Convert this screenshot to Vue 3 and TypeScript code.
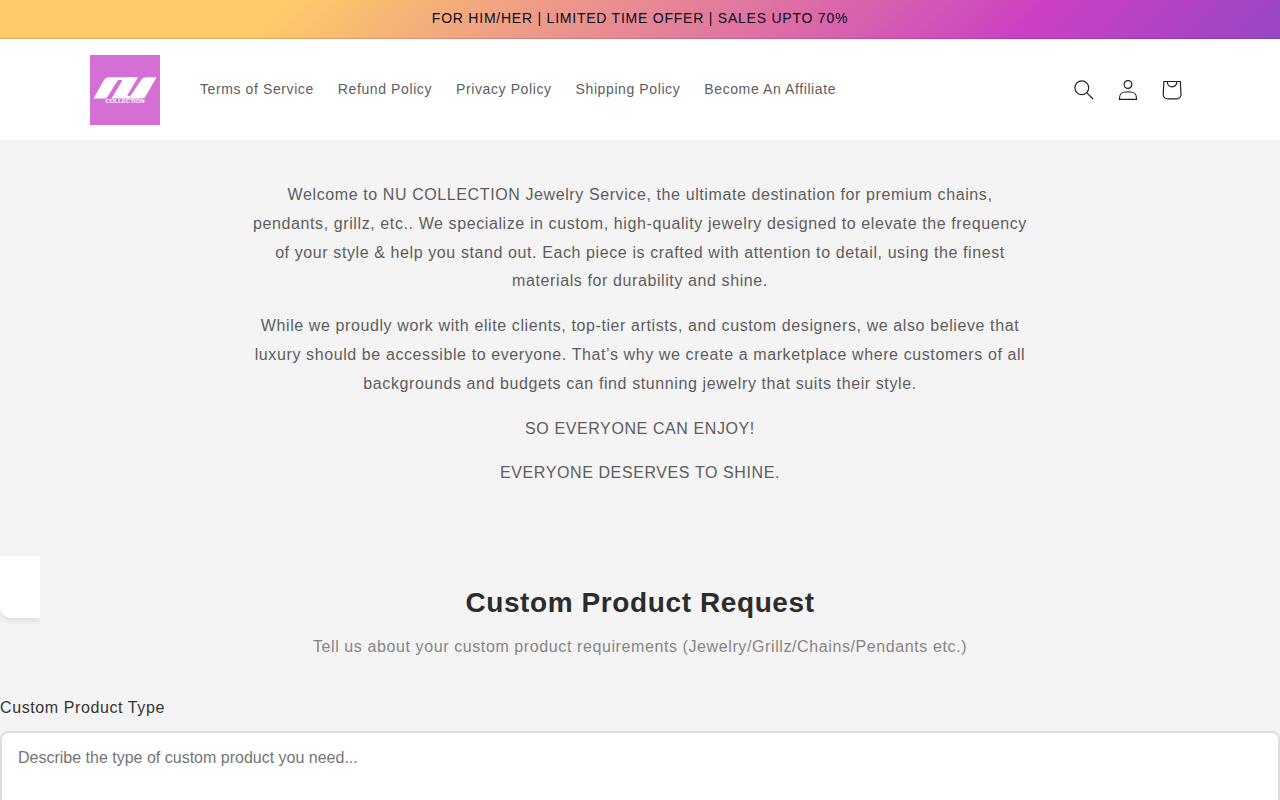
<script setup lang="ts">
const links: string[] = [
  'Terms of Service',
  'Refund Policy',
  'Privacy Policy',
  'Shipping Policy',
  'Become An Affiliate',
]

const intro: string[] = [
  'Welcome to NU COLLECTION Jewelry Service, the ultimate destination for premium chains, pendants, grillz, etc.. We specialize in custom, high-quality jewelry designed to elevate the frequency of your style & help you stand out. Each piece is crafted with attention to detail, using the finest materials for durability and shine.',
  'While we proudly work with elite clients, top-tier artists, and custom designers, we also believe that luxury should be accessible to everyone. That’s why we create a marketplace where customers of all backgrounds and budgets can find stunning jewelry that suits their style.',
  'SO EVERYONE CAN ENJOY!',
  'EVERYONE DESERVES TO SHINE.',
]
</script>

<template>
  <div class="page">
    <div class="announcement">
      <p>FOR HIM/HER | LIMITED TIME OFFER | SALES UPTO 70%</p>
    </div>

    <header class="header">
      <div class="header-inner">
        <a class="logo" href="#" aria-label="NU Collection">
          <svg viewBox="0 0 70 70" width="70" height="70">
            <rect width="70" height="70" fill="#d66fd4" />
            <path
              d="M3.500 43.500 14 25q1.500-2.700 4.500-2.700H48L37.500 40q-.5 1 .6 1h1.400q1 0 1.600-1L51.500 24.500q1.300-2.200 4-2.200H66.500L55.500 41.500q-1.200 2-3.500 2H21.500L32 26q.5-1-.6-1H29q-1 0-1.600 1L17 42.500q-.6 1-1.800 1Z"
              fill="#fff"
            />
            <text x="35" y="48" class="logo-text" text-anchor="middle">COLLECTION</text>
          </svg>
        </a>
        <nav class="nav" aria-label="Main">
          <a v-for="link in links" :key="link" href="#">{{ link }}</a>
        </nav>
        <div class="actions">
          <button type="button" aria-label="Search">
            <svg viewBox="0 0 20 20" width="20" height="20">
              <circle cx="7.800" cy="7.800" r="6.900" />
              <path d="m12.700 12.700 6.300 6.300" />
            </svg>
          </button>
          <a href="#" aria-label="Log in">
            <svg viewBox="0 0 20 20" width="20" height="20">
              <circle cx="10" cy="4.500" r="3.900" />
              <path d="M1.500 19.400V18c0-3.500 2.500-6 6-6h5c3.500 0 6 2.500 6 6v1.400Z" />
            </svg>
          </a>
          <a href="#" aria-label="Cart">
            <svg viewBox="0 0 20 20" width="20" height="20">
              <path d="M1.900 1.500h16.400l.7 12.800c.1 2.900-1.800 4.500-4.500 4.500H5.700c-2.700 0-4.600-1.600-4.500-4.500ZM5.400 1.500v.7c0 2.600 2.100 4.600 4.700 4.600s4.700-2 4.700-4.600v-.7" />
            </svg>
          </a>
        </div>
      </div>
    </header>

    <main>
      <section class="intro">
        <p v-for="text in intro" :key="text">{{ text }}</p>
      </section>

      <section class="request">
        <div class="tab"></div>
        <h2>Custom Product Request</h2>
        <p class="lead">
          Tell us about your custom product requirements (Jewelry/Grillz/Chains/Pendants etc.)
        </p>
        <form>
          <label for="product-type">Custom Product Type</label>
          <textarea
            id="product-type"
            rows="5"
            placeholder="Describe the type of custom product you need..."
          ></textarea>
        </form>
      </section>
    </main>
  </div>
</template>

<style>
html {
  background: #f4f4f4;
  scrollbar-width: none;
}
</style>

<style scoped>
.page {
  font-family: "Liberation Sans", Arial, sans-serif;
  font-size: 16px;
  line-height: 1.8;
  letter-spacing: 0.0375em;
  color: #5d5d5d;
}
.announcement {
  display: flex;
  justify-content: center;
  padding: 7px 16px 8px;
  border-bottom: 1px solid rgba(18, 18, 18, 0.15);
  background: linear-gradient(135deg, #ffca68 22%, #cc40c4 80%, #9747c4 100%) border-box;
  color: #080d1c;
}
.announcement p {
  margin: 0;
  font-size: 14px;
  line-height: 23px;
  letter-spacing: 0.055em;
}
.header {
  background: #fff;
  border-bottom: 1px solid #f1f1f1;
}
.header-inner {
  display: flex;
  align-items: center;
  box-sizing: border-box;
  max-width: 1200px;
  margin: 0 auto;
  padding: 16px 50px 15px;
}
.logo,
.logo svg {
  display: block;
}
.logo-text {
  font-size: 6px;
  font-weight: 700;
  letter-spacing: 0;
  fill: #fff;
}
.nav {
  display: flex;
  gap: 24px;
  margin-left: 40px;
  padding-bottom: 2px;
  font-size: 14px;
}
.nav a {
  color: #5d5d5d;
  line-height: 24px;
  text-decoration: none;
}
.actions {
  display: flex;
  margin: 0 -4px 0 auto;
}
.actions a,
.actions button {
  display: grid;
  place-items: center;
  width: 44px;
  height: 44px;
  padding: 0;
  border: 0;
  background: none;
}
.actions svg {
  fill: none;
  stroke: #222;
  stroke-width: 1.2;
}
.intro {
  box-sizing: border-box;
  max-width: 780px;
  margin: 0 auto;
  padding: 40px 0 68px;
  text-align: center;
}
.intro p {
  margin: 0 0 16px;
}
.intro p:last-child {
  margin: 0;
}
.request {
  position: relative;
  padding-top: 29px;
}
.tab {
  position: absolute;
  top: 0;
  left: 0;
  width: 40px;
  height: 62px;
  border-radius: 0 0 0 12px;
  background: #fff;
  box-shadow: 0 4px 6px rgba(0, 0, 0, 0.08);
  clip-path: inset(0 0 -12px 0);
}
h2 {
  margin: 0;
  font-size: 28px;
  line-height: 36px;
  text-align: center;
  color: #2c2c2c;
}
.lead {
  margin: 12px 0 32px;
  text-align: center;
  color: #858585;
}
form {
  display: grid;
  gap: 8px;
}
label {
  color: #333;
}
textarea {
  box-sizing: border-box;
  width: 100%;
  padding: 15px 16px;
  border: 2px solid #dfdfdf;
  border-radius: 8px;
  background: #fff;
  font: 16px/20px "Liberation Sans", Arial, sans-serif;
  resize: none;
}
textarea::placeholder {
  color: #757575;
}
</style>
